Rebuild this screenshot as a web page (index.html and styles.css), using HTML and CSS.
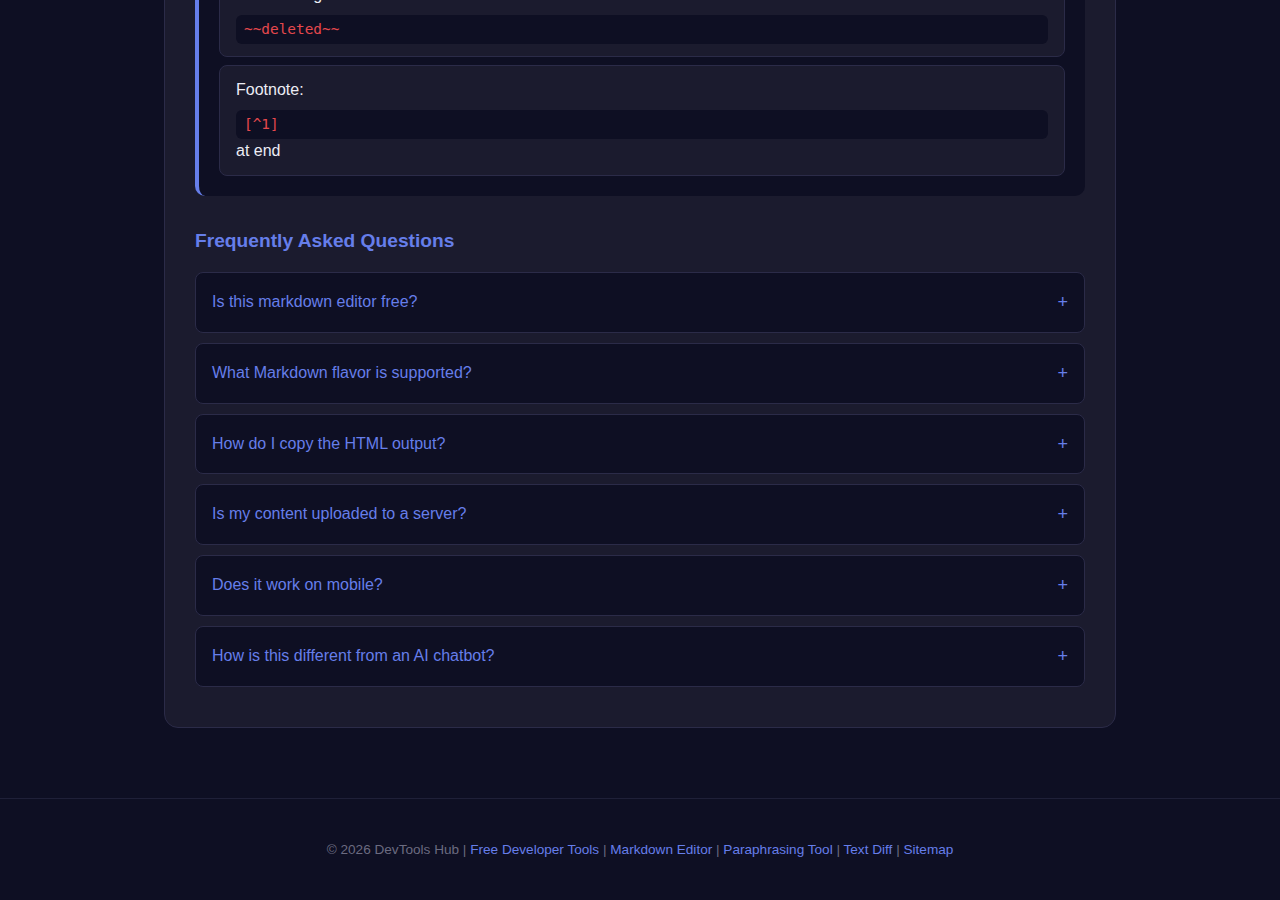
FILE: index.html
```html
<!DOCTYPE html>
<html lang="en">
<head>
  <meta charset="UTF-8" />
  <meta name="viewport" content="width=device-width, initial-scale=1.0"/>
  <title>Markdown Editor - DevTools Hub</title>
  <link rel="stylesheet" href="styles.css">
</head>
<body>
  <main class="tarjeta">
    <div class="cheatsheet">
      <div class="item">
        <div class="etiqueta">Strikethrough:</div>
        <code class="codigo">~~deleted~~</code>
      </div>
      <div class="item">
        <div class="etiqueta">Footnote:</div>
        <code class="codigo">[^1]</code>
        <div class="etiqueta">at end</div>
      </div>
    </div>

    <section class="faq">
      <h2>Frequently Asked Questions</h2>
      <div class="pregunta"><span>Is this markdown editor free?</span><span class="mas">+</span></div>
      <div class="pregunta"><span>What Markdown flavor is supported?</span><span class="mas">+</span></div>
      <div class="pregunta"><span>How do I copy the HTML output?</span><span class="mas">+</span></div>
      <div class="pregunta"><span>Is my content uploaded to a server?</span><span class="mas">+</span></div>
      <div class="pregunta"><span>Does it work on mobile?</span><span class="mas">+</span></div>
      <div class="pregunta"><span>How is this different from an AI chatbot?</span><span class="mas">+</span></div>
    </section>
  </main>

  <footer class="pie">
    <span class="gris">© 2026 DevTools Hub |</span>
    <a href="#">Free Developer Tools</a> <span class="gris">|</span>
    <a href="#">Markdown Editor</a> <span class="gris">|</span>
    <a href="#">Paraphrasing Tool</a> <span class="gris">|</span>
    <a href="#">Text Diff</a> <span class="gris">|</span>
    <a href="#">Sitemap</a>
  </footer>
</body>
</html>
```

FILE: styles.css
```css
* { margin: 0; padding: 0; box-sizing: border-box; }

html, body {
  background: #0e0f23;
  font-family: 'Liberation Sans', Arial, sans-serif;
  color: #e6e6f0;
  overflow: hidden;
}

.tarjeta {
  width: 952px;
  margin: -81px auto 70px;
  padding: 30px 30px 40px;
  background: #1b1b2e;
  border: 1px solid #2b2b48;
  border-radius: 14px;
}

.cheatsheet {
  display: flex;
  flex-direction: column;
  gap: 8px;
  padding: 20px;
  background: #0e0f23;
  border-left: 4px solid #667eea;
  border-radius: 10px;
}

.item {
  padding: 12px 16px;
  background: #1b1b2e;
  border: 1px solid #2b2b48;
  border-radius: 8px;
}

.etiqueta {
  font-size: 16px;
  line-height: 24px;
  color: #ececf4;
}

.codigo {
  display: block;
  margin-top: 8px;
  padding: 6px 8px;
  background: #0e0f23;
  border-radius: 6px;
  font-family: 'DejaVu Sans Mono', monospace;
  font-size: 14.4px;
  line-height: 17px;
  color: #e5484d;
}

.faq {
  margin-top: 34px;
}

.faq h2 {
  font-size: 19.2px;
  line-height: 22px;
  font-weight: bold;
  color: #667eea;
  margin-bottom: 20px;
}

.pregunta {
  display: flex;
  justify-content: space-between;
  align-items: center;
  padding: 20px 16px;
  margin-bottom: 10px;
  background: #0e0f23;
  border: 1px solid #2b2b48;
  border-radius: 8px;
  font-size: 16px;
  line-height: 18.8px;
  color: #667eea;
}

.pregunta:last-child {
  margin-bottom: 0;
}

.mas {
  font-size: 18px;
  line-height: 18.8px;
}

.pie {
  padding: 40px 20px;
  border-top: 1px solid #1f2038;
  text-align: center;
  font-size: 13.6px;
  line-height: 21px;
}

.pie a {
  color: #667eea;
  text-decoration: none;
}

.gris {
  color: #6b6b80;
}
```
